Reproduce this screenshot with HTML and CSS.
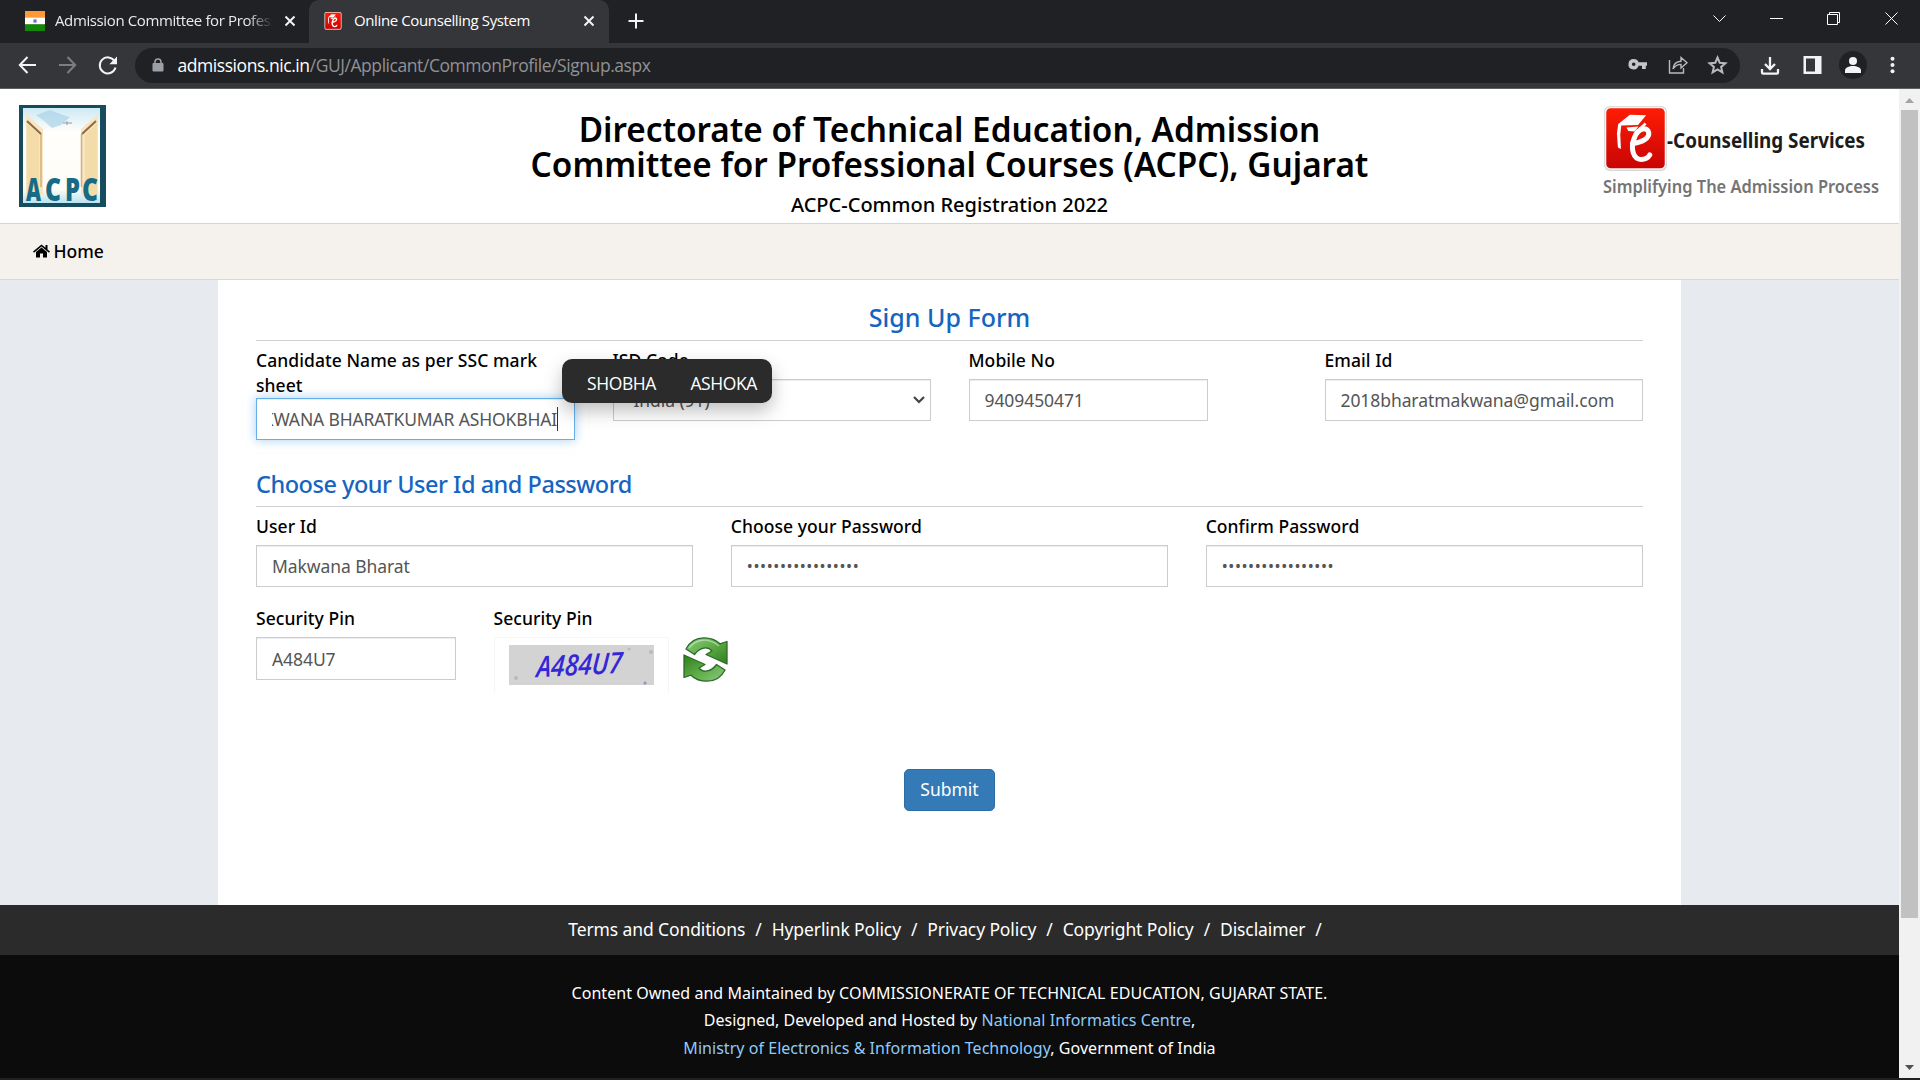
FILE: index.html
```html
<!DOCTYPE html>
<html lang="en">
<head>
<meta charset="utf-8">
<title>Online Counselling System</title>
<link rel="stylesheet" href="styles.css">
</head>
<body>
<div class="tabstrip">
  <div class="tab">
    <svg class="flag" width="20" height="20" viewBox="0 0 20 20"><path fill="#ff9933" d="M0 0h20v7H0z"/><path fill="#fff" d="M0 6.700h20v7H0z"/><path fill="#138808" d="M0 13.300h20V20H0z"/><circle cx="10" cy="10" r="2.200" fill="#a9a9dc"/><circle cx="10" cy="10" r="1" fill="#5b5bb8"/></svg>
    <span class="tab-title faded">Admission Committee for Professional</span>
    <svg class="x" width="12" height="12" viewBox="0 0 12 12"><path d="M1.500 1.500l9 9m0-9l-9 9"/></svg>
  </div>
  <div class="tab active">
    <svg width="18" height="18" viewBox="0 0 62 66"><use href="#brand"/></svg>
    <span class="tab-title second">Online Counselling System</span>
    <svg class="x" width="12" height="12" viewBox="0 0 12 12"><path d="M1.500 1.500l9 9m0-9l-9 9"/></svg>
  </div>
  <svg class="plus" width="16" height="16" viewBox="0 0 16 16"><path d="M8 .5v15M.5 8h15"/></svg>
  <svg class="winctl" width="210" height="24" viewBox="1700 6 210 24"><path d="M1713.500 15.500l6 6 6-6M1770 18.500h13M1827.500 14.500h10v10h-10zM1829.500 14.500v-2h10v10h-2M1885.500 12.500l12 12m0-12l-12 12"/></svg>
</div>
<div class="toolbar">
  <svg width="110" height="24" viewBox="14 53 110 24" class="navicons"><path d="M36 65H20m7.500-8L19.800 65l7.700 8"/><path class="dim" d="M59 65h16m-7.500-8l7.700 8-7.700 8"/><path d="M114.500 61a8 8 0 1 0 1 6.500"/><path class="solid" d="M117 56.500v7.700h-7.700z"/></svg>
  <div class="omnibox">
    <svg width="12" height="14" viewBox="0 0 12 14"><path fill="#9aa0a6" d="M1.500 5h9a1 1 0 0 1 1 1v6.500a1 1 0 0 1-1 1h-9a1 1 0 0 1-1-1V6a1 1 0 0 1 1-1z"/><path fill="none" stroke="#9aa0a6" stroke-width="1.600" d="M3 5.500V4a3 3 0 0 1 6 0v1.500"/></svg>
    <span class="url"><b>admissions.nic.in</b>/GUJ/Applicant/CommonProfile/Signup.aspx</span>
    <svg class="omni-icons" width="110" height="24" viewBox="1622 54 110 24"><path fill="#c4c6c9" fill-rule="evenodd" d="M1633.700 60a5.200 5.200 0 1 0 4.900 6.800h3.400V70h3.800v-3.200h1.200v-3.600h-8.400a5.200 5.200 0 0 0-4.900-3.200zm0 3.400a1.800 1.800 0 1 1 0 3.600 1.800 1.800 0 0 1 0-3.600z"/><path class="ln" d="M1669.500 61v13h14v-5M1673 70c.5-5 3.500-7.500 8-7.700V58.500l6 5.300-6 5.200v-3.600c-3.500 0-6 1.400-8 4.600z"/><path class="ln thick" d="M1717.500 58.500l2.200 5.200 5.700.5-4.300 3.700 1.300 5.500-4.900-2.900-4.900 2.900 1.300-5.500-4.300-3.700 5.700-.5z"/></svg>
  </div>
  <svg class="tools" width="150" height="32" viewBox="1755 49 150 32"><path class="w" d="M1770 57v12m-5-5l5 5 5-5M1762 69v3.500q0 1.200 1.200 1.200h13.600q1.200 0 1.200-1.200V69"/><path fill="#f1f3f4" fill-rule="evenodd" d="M1803.500 56h18v18h-18zm2.500 2.500v13h9v-13z"/><circle cx="1853" cy="65" r="14" fill="#202124"/><circle cx="1853" cy="61" r="4" fill="#f1f3f4"/><path fill="#f1f3f4" d="M1845 73v-2.500c0-3 4-4.500 8-4.500s8 1.500 8 4.500V73z"/><g fill="#f1f3f4"><circle cx="1892.500" cy="58.700" r="2"/><circle cx="1892.500" cy="65" r="2"/><circle cx="1892.500" cy="71.300" r="2"/></g></svg>
</div>
<div class="viewport">
  <div class="page">
    <header class="masthead">
      <svg class="acpc" width="88" height="103" viewBox="0 0 88 103">
        <defs><linearGradient id="sky" x1="0" x2="0" y1="0" y2="1"><stop offset="0" stop-color="#cdeaf3"/><stop offset=".25" stop-color="#fffefb"/><stop offset=".85" stop-color="#fffdf7"/><stop offset="1" stop-color="#b9e3f1"/></linearGradient></defs>
        <path fill="#174c5e" d="M0 0h87v102H0z"/><path fill="url(#sky)" d="M4 3h77v95H4z"/>
        <path fill="#a9d3e8" d="M17 10l14-5 13 5 7 2-9 8-9 3-8-7z" opacity=".7"/>
        <path fill="#f8e6c2" d="M7 9l17 15v66H7zM79 9L62 24v66h17z"/><path fill="#f3dca8" d="M8 18l12 12v60H8zM78 18L66 30v60h12z"/>
        <path fill="none" stroke="#d3b07a" stroke-width="1.500" d="M22 29v53M62.500 29v53"/><path fill="none" stroke="#8f6a3f" stroke-width="2" d="M8 16l14 13M77 16L63 29"/><path stroke="#9a9a9a" d="M44 18h9m-5-2v4"/>
        <g font-family="Open Sans, sans-serif" font-weight="800" font-size="32" fill="#176b86"><text x="7" y="96" textLength="15" lengthAdjust="spacingAndGlyphs">A</text><text x="26" y="96" textLength="16" lengthAdjust="spacingAndGlyphs">C</text><text x="46" y="96" textLength="15" lengthAdjust="spacingAndGlyphs">P</text><text x="63" y="96" textLength="16" lengthAdjust="spacingAndGlyphs">C</text></g>
      </svg>
      <div class="titles"><h1>Directorate of Technical Education, Admission<br>Committee for Professional Courses (ACPC), Gujarat</h1><p>ACPC-Common Registration 2022</p></div>
      <svg class="ecs" width="282" height="96" viewBox="1600 102 282 96">
        <defs><linearGradient id="red" x1="0" x2="0" y1="0" y2="1"><stop offset="0" stop-color="#ff1d05"/><stop offset="1" stop-color="#c80404"/></linearGradient>
        <g id="brand"><rect x="0" y="0" width="62" height="65" rx="6" fill="#d6d6d6"/><rect x="1.500" y="1.500" width="59" height="61.500" rx="5" fill="url(#red)" stroke="#f3f3f3" stroke-width="1.500"/><path fill="#fff" d="M14 18L25.500 8.700l16 .6-8 9.700L17 19.500l-1 9 .7 14.500-3-1.500-1-14z"/><path fill="#fff" d="M22 21.500l12-1-4 5-6-.5z"/><path fill="none" stroke="#fff" stroke-width="5" stroke-linecap="round" d="M28 37.500c9-1 17-5 16-11-1-5.500-10-5.500-14 5-4.500 11-1 22 6.500 22 4 0 7-2 8.500-4.500"/><path fill="none" stroke="#fff" stroke-width="2.500" d="M35 23l6-5.500"/></g></defs>
        <svg x="1604" y="106" width="63" height="65" viewBox="0 0 62 65" preserveAspectRatio="none"><use href="#brand"/></svg>
        <text x="1667" y="148" textLength="198" lengthAdjust="spacingAndGlyphs" font-size="21" font-weight="700" fill="#1c1c1c">-Counselling Services</text>
        <text x="1603" y="193" textLength="276" lengthAdjust="spacingAndGlyphs" font-size="17" font-weight="600" fill="#747474">Simplifying The Admission Process</text>
      </svg>
    </header>
    <nav class="menu"><svg width="17" height="14" viewBox="0 0 17 14"><path d="M8.500.5L0 7.500l1 1.200 7.500-6.200L16 8.700l1-1.200-2.500-2V1h-2v2.800zM8.500 3.500L3 8v5.500h4V9.500h3v4h4V8z"/></svg><span>Home</span></nav>
    <main class="form">
      <h2 class="center">Sign Up Form</h2>
      <div class="row four">
        <div class="field"><label>Candidate Name as per SSC mark sheet</label><div class="input focus"><span class="overflow">MAKWANA BHARATKUMAR ASHOKBHAI</span></div>
          <div class="suggest"><span>SHOBHA</span><span>ASHOKA</span></div></div>
        <div class="field"><label>ISD Code</label><div class="input select"><span>India (91)</span><svg width="12" height="8" viewBox="0 0 12 8"><path fill="none" stroke="#444" stroke-width="2.200" d="M1 1l5 5 5-5"/></svg></div></div>
        <div class="field"><label>Mobile No</label><div class="input mobile">9409450471</div></div>
        <div class="field"><label>Email Id</label><div class="input email">2018bharatmakwana@gmail.com</div></div>
      </div>
      <h2 class="second-h">Choose your User Id and Password</h2>
      <div class="row three">
        <div class="field"><label>User Id</label><div class="input">Makwana Bharat</div></div>
        <div class="field"><label>Choose your Password</label><div class="input dots">•••••••••••••••••</div></div>
        <div class="field"><label>Confirm Password</label><div class="input dots">•••••••••••••••••</div></div>
      </div>
      <div class="row pins">
        <div class="field"><label>Security Pin</label><div class="input pin">A484U7</div></div>
        <div class="field"><label>Security Pin</label>
          <div class="captcha-line"><div class="captcha"><svg width="145" height="40" viewBox="0 0 145 40"><path fill="#d3d3d3" d="M0 0h145v40H0z"/><g fill="#b9b9c2"><circle cx="7" cy="33" r="2"/><circle cx="142" cy="7" r="2"/><circle cx="120" cy="4" r="1.500"/><circle cx="136" cy="38" r="1.500" fill="#8f8fd0"/></g><text x="27" y="30" textLength="86" lengthAdjust="spacingAndGlyphs" transform="rotate(-3 70 20) skewX(-7) translate(3 0)" font-family="Open Sans, sans-serif" font-style="italic" font-weight="600" font-size="29" fill="#3526d6">A484U7</text></svg></div>
          <svg class="refresh" width="45" height="45" viewBox="0 0 45 45"><defs><linearGradient id="gr" x1="0" x2="1" y1="0" y2="1"><stop offset="0" stop-color="#8cc983"/><stop offset=".5" stop-color="#5dab45"/><stop offset="1" stop-color="#2e7d1e"/></linearGradient></defs><g fill="url(#gr)" stroke="#2c6b28" stroke-width="1.300" stroke-linejoin="round"><path id="arr" d="M3 12C7 4 14 .8 21 .8c7 0 12 2 16 6l7-2.300V27L23 17.500l6-3.500C25 9 17 10 11.500 17.500z"/><use href="#arr" transform="rotate(180 22.500 22.500)"/></g><path fill="none" stroke="#d9f0d2" stroke-width="1.300" opacity=".6" d="M6 11C13 2 25 0 36 9"/></svg></div>
        </div>
      </div>
      <button class="submit">Submit</button>
    </main>
    <footer>
      <div class="links"><a>Terms and Conditions</a><i>/</i><a>Hyperlink Policy</a><i>/</i><a>Privacy Policy</a><i>/</i><a>Copyright Policy</a><i>/</i><a>Disclaimer</a><i>/</i></div>
      <div class="legal"><p>Content Owned and Maintained by COMMISSIONERATE OF TECHNICAL EDUCATION, GUJARAT STATE.</p><p>Designed, Developed and Hosted by <a>National Informatics Centre</a>,</p><p><a>Ministry of Electronics &amp; Information Technology</a>, Government of India</p></div>
    </footer>
  </div>
  <div class="scrollbar"><svg width="9" height="5" viewBox="0 0 9 5"><path fill="#a3a3a3" d="M0 5l4.500-5L9 5z"/></svg><div class="thumb"></div><svg class="down" width="9" height="5" viewBox="0 0 9 5"><path fill="#505050" d="M0 0h9L4.500 5z"/></svg></div>
</div>
</body>
</html>
```
FILE: styles.css
```css
* { box-sizing: border-box; }
body { margin: 0; width: 1920px; height: 1080px; overflow: hidden; display: flex; flex-direction: column; background: #202124; font-family: "Noto Sans", sans-serif; font-size: 17.5px; color: #000; }
svg { display: block; flex: none; }
h1, h2, p { margin: 0; font-weight: 500; }

.tabstrip { height: 43px; display: flex; background: #202124; color: #e8eaed; font-family: "Open Sans", sans-serif; font-size: 15px; }
.tab { display: flex; align-items: center; width: 309px; height: 43px; padding: 0 13px 2px 25px; }
.tab-title { flex: 1; white-space: nowrap; overflow: hidden; margin-left: 10px; margin-right: 11px; padding-bottom: 2px; letter-spacing: -0.38px; }
.faded { mask-image: linear-gradient(90deg, #000 88%, transparent); }
.second { margin-left: 12px; }
.active { width: 300px; padding: 0 14px 2px 15px; background: #35363a; border-radius: 10px 10px 0 0; color: #fff; }
.x, .plus { fill: none; stroke: #f1f3f4; stroke-width: 2; }
.plus { margin: 13px 0 0 19px; }
.winctl { margin: 6px 10px 0 auto; fill: none; stroke: #fff; stroke-width: 1; }

.toolbar { height: 46px; display: flex; align-items: center; padding: 0 15px 1px 14px; background: #35363a; border-bottom: 1px solid #5f6063; }
.navicons { fill: none; stroke: #f1f3f4; stroke-width: 2; }
.navicons .dim { stroke: #7d7e81; }
.navicons .solid { fill: #f1f3f4; stroke: none; }
.omnibox { width: 1605px; height: 35px; margin-left: 11px; padding: 0 8px 0 17px; border-radius: 18px; background: #202124; display: flex; align-items: center; font-family: "Open Sans", sans-serif; font-size: 17.5px; }
.url { margin-left: 13.5px; color: #8f9296; letter-spacing: -0.44px; white-space: nowrap; }
.url b { font-weight: 400; color: #fff; }
.omni-icons { margin-left: auto; }
.ln { fill: none; stroke: #b8babd; stroke-width: 1.4; }
.thick { stroke-width: 2; }
.tools { margin-left: auto; }
.tools .w { fill: none; stroke: #f1f3f4; stroke-width: 2.3; }

.viewport { height: 989px; display: flex; }
.page { width: 1899px; display: flex; flex-direction: column; background: #e7ebf0; }
.masthead { height: 135px; flex: none; display: flex; justify-content: space-between; background: #fff; border-bottom: 1px solid #d4d4d4; padding: 0 17px 0 19px; }
.acpc { margin-top: 16px; }
.ecs { margin-top: 13px; }
.titles { width: 1000px; margin-left: 192px; padding-top: 23px; text-align: center; }
.titles h1 { font-size: 33.3px; line-height: 35px; font-weight: 600; white-space: nowrap; }
.titles p { font-size: 20px; line-height: 28px; margin-top: 9px; }
.menu { height: 56px; flex: none; display: flex; align-items: center; gap: 4px; padding: 0 0 2px 32.5px; background: #f5f2ed; border-bottom: 1px solid #d8d8d8; font-weight: 500; }

.form { width: 1463px; height: 625px; flex: none; margin-left: 218px; padding: 0 38px; background: #fff; }
h2 { font-size: 25px; line-height: 34px; color: #1565c0; border-bottom: 1px solid #cfd0d1; }
.center { height: 61px; padding-top: 20px; text-align: center; }
.row { display: grid; column-gap: 37.5px; padding-top: 7px; }
.four { grid-template-columns: repeat(4, 1fr); height: 126px; }
.three { grid-template-columns: repeat(3, 1fr); height: 92px; }
.pins { grid-template-columns: 200px 240px; height: 170px; }
.second-h { height: 40px; font-size: 23.5px; line-height: 34px; letter-spacing: -0.48px; }
.field { position: relative; }
label { display: block; font-weight: 500; line-height: 25px; min-height: 31px; letter-spacing: 0.06px; }
.input { height: 42px; display: flex; align-items: center; padding: 0 15px; border: 1px solid #ccc; background: #fff; box-shadow: inset 0 1px 1px rgba(0,0,0,.075); color: #555; white-space: nowrap; letter-spacing: -0.08px; }
.pin { height: 43px; padding-top: 1px; }
.focus { justify-content: flex-end; padding-right: 16px; border-color: #66afe9; box-shadow: inset 0 1px 1px rgba(0,0,0,.075), 0 0 10px rgba(102,175,233,.6); }
.overflow { display: flex; justify-content: flex-end; width: 286px; overflow: hidden; border-right: 1px solid #333; letter-spacing: -0.16px; }
.select { justify-content: space-between; padding: 0 5px 0 20px; }
.mobile { width: 239px; }
.dots { font-size: 16px; letter-spacing: 0.6px; }
.suggest { position: absolute; z-index: 2; left: 306px; top: 11px; width: 210px; height: 44px; display: flex; align-items: center; padding: 4px 15px 0 25px; justify-content: space-between; border-radius: 10px; background: #2b2b2b; color: #fff; font-family: "Open Sans", sans-serif; font-size: 17.5px; box-shadow: 0 8px 18px rgba(0,0,0,.25); letter-spacing: -0.4px; }
.captcha-line { display: flex; }
.captcha { width: 175px; height: 56px; padding: 7px 0 0 14px; border: 1px solid #f6f6f6; border-bottom: 0; }
.refresh { margin-left: 14px; }
.submit { display: block; width: 91px; height: 42px; margin: 0 auto; padding: 0 0 2px; border: 1px solid #2e6da4; border-radius: 5px; background: #337ab7; color: #fff; font: 400 17.5px "Noto Sans", sans-serif; }

.links { height: 50px; display: flex; justify-content: center; align-items: center; background: #2b2b2b; color: #fff; padding: 0 9px 2px 0; letter-spacing: -0.11px; }
.links i { font-style: normal; margin: 0 10px; }
.links i:last-child { margin-right: 0; }
.legal { height: 123px; padding-top: 25px; text-align: center; background: #0c0c0c; color: #fff; font-size: 16px; line-height: 27.3px; letter-spacing: 0.04px; }
.legal p { font-weight: 400; }
.legal a { color: #90caf9; }
.scrollbar { width: 21px; display: flex; flex-direction: column; align-items: center; padding: 9px 0 8px; background: #f1f1f1; }
.thumb { width: 17px; height: 808px; margin-top: 7px; background: #c1c1c1; }
.down { margin-top: auto; }
```
